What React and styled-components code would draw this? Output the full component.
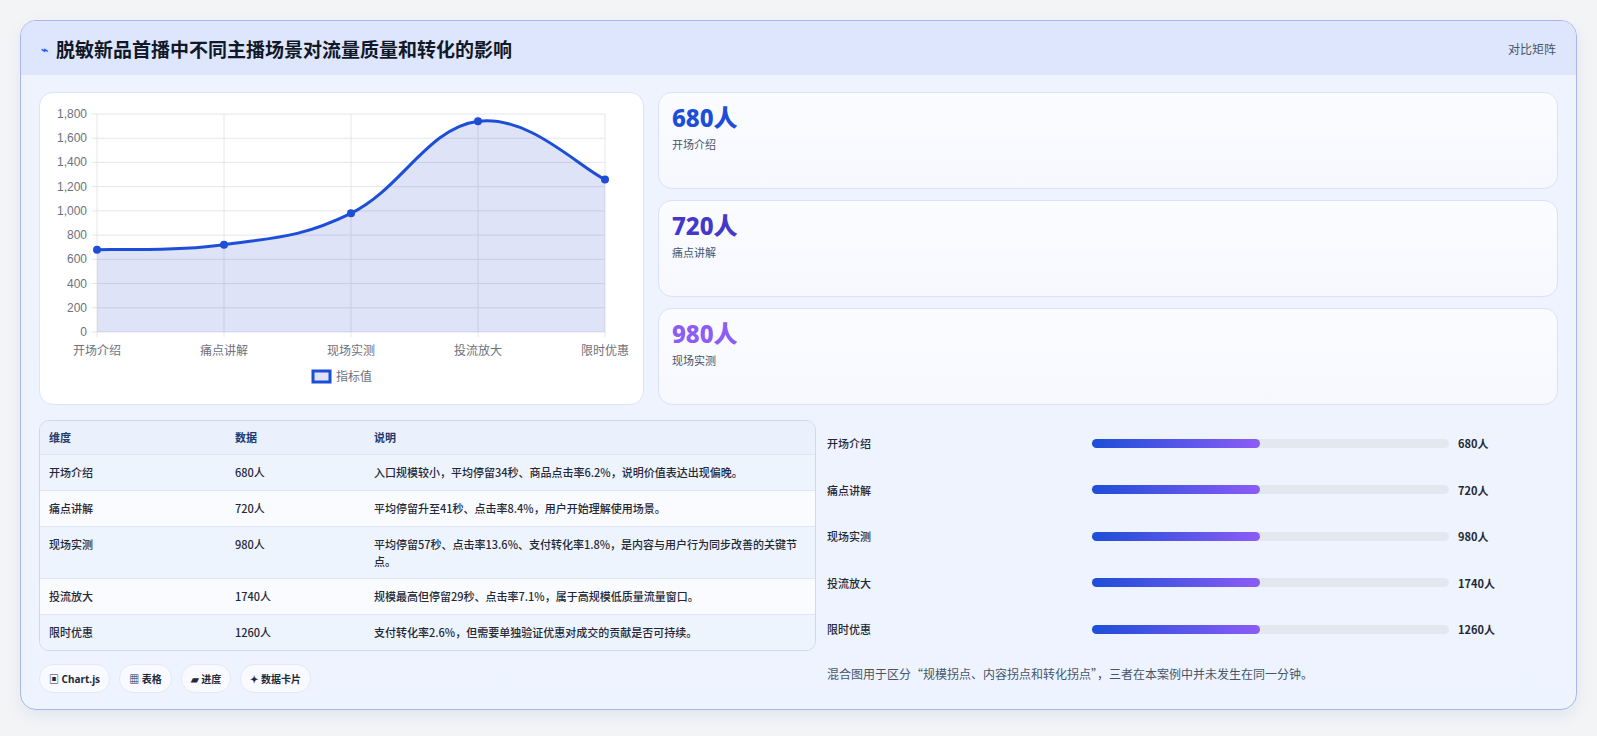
import React from "react";
import styled, { createGlobalStyle } from "styled-components";

const G = createGlobalStyle`
  body{margin:0;background:#f3f4f6;font-family:"Noto Sans","Noto Sans CJK SC",sans-serif;}
`;
const Page = styled.div`padding:20px 20px 35px 20px;`;
const Card = styled.div`border:1px solid #aab6e6;border-radius:16px;background:linear-gradient(180deg,#eef3fe,#eef4ff);overflow:hidden;box-shadow:0 6px 16px rgba(30,60,140,.08);`;
const Header = styled.div`height:54px;background:#dde6fd;display:flex;align-items:center;justify-content:space-between;padding:0 20px;`;
const Title = styled.h1`margin:0;font-size:19px;font-weight:700;color:#111827;font-family:"Noto Sans CJK SC",sans-serif;display:flex;align-items:center;gap:8px;`;
const Bolt = styled.span`color:#2563eb;font-size:12px;`;
const HeadRight = styled.span`font-size:12px;color:#475569;font-family:"Noto Sans CJK SC",sans-serif;`;
const Body = styled.div`padding:17px 18px 16px 18px;display:flex;flex-direction:column;gap:15px;`;
const Top = styled.div`display:grid;grid-template-columns:605px 1fr;gap:14px;height:313px;`;
const Panel = styled.div`background:#fff;border:1px solid #dbe3f5;border-radius:14px;`;
const Stats = styled.div`display:grid;grid-template-rows:repeat(3,1fr);gap:11px;`;
const Stat = styled.div`background:linear-gradient(180deg,#fbfcff,#f6f8fe);border:1px solid #d9e2f6;border-radius:14px;padding:10px 13px;`;
const Val = styled.div`font-size:24px;font-weight:800;color:${p=>p.c};line-height:30px;font-family:"Noto Sans","Noto Sans CJK SC",sans-serif;`;
const Lbl = styled.div`font-size:11px;color:#475569;margin-top:3px;font-family:"Noto Sans CJK SC",sans-serif;`;
const Bottom = styled.div`display:grid;grid-template-columns:777px 1fr;gap:11px;`;
const Table = styled.div`border:1px solid #cfd9ee;border-radius:10px;overflow:hidden;background:#f4f8ff;font-family:"Noto Sans CJK SC",sans-serif;font-size:11px;color:#1f2937;`;
const Row = styled.div`display:grid;grid-template-columns:186px 139px 1fr;padding:${p=>p.h?"8px 9px":"9px 9px 8px"};min-height:${p=>p.h?16:18}px;border-top:${p=>p.first?"none":"1px solid #dfe6f3"};background:${p=>p.h?"#eaf1fd":p.alt?"#f9fbfe":"#eef4fe"};font-weight:${p=>p.h?700:500};color:${p=>p.h?"#1e3a6e":"#1f2937"};line-height:17px;`;
const Right = styled.div`display:flex;flex-direction:column;padding-top:0;`;
const PRow = styled.div`display:grid;grid-template-columns:265px 366px 1fr;align-items:center;height:46.5px;font-size:11px;font-family:"Noto Sans CJK SC",sans-serif;color:#1f2937;font-weight:500;`;
const Track = styled.div`height:9px;border-radius:5px;background:#e2e7f0;margin-right:9px;`;
const Fill = styled.div`height:100%;border-radius:5px;background:linear-gradient(90deg,#1d4ed8,#8b5cf6);`;
const PVal = styled.span`font-weight:700;`;
const Note = styled.div`font-size:12px;color:#475569;margin-top:12px;font-family:"Noto Sans CJK SC",sans-serif;`;
const Chips = styled.div`display:flex;gap:9px;`;
const Chip = styled.span`background:#f8faff;border:1px solid #e3e8f2;border-radius:14px;padding:6px 9px;font-size:10px;font-weight:700;color:#1f2937;font-family:"Noto Sans","Noto Sans CJK SC",sans-serif;`;
const LeftCol = styled.div`display:flex;flex-direction:column;gap:13px;`;

const vals=[680,720,980,1740,1260];
const cats=["开场介绍","痛点讲解","现场实测","投流放大","限时优惠"];
const X=i=>57+i*127;
const Y=v=>239-v/1800*218;

function Chart(){
  const pts=vals.map((v,i)=>[X(i),Y(v)]);
  let d=`M${pts[0][0]},${pts[0][1]}`;
  for(let i=0;i<pts.length-1;i++){
    const p0=pts[i-1]||pts[i],p1=pts[i],p2=pts[i+1],p3=pts[i+2]||p2,t=0.4/2;
    const c1=[p1[0]+(p2[0]-p0[0])*t,p1[1]+(p2[1]-p0[1])*t];
    const c2=[p2[0]-(p3[0]-p1[0])*t,p2[1]-(p3[1]-p1[1])*t];
    d+=` C${c1[0]},${c1[1]} ${c2[0]},${c2[1]} ${p2[0]},${p2[1]}`;
  }
  return(
    <svg width="603" height="311" style={{display:"block"}} fontFamily="'Liberation Sans','Noto Sans CJK SC',sans-serif">
      {Array.from({length:10},(_,k)=>{const y=Y(k*200);return(<g key={k}><line x1="52" x2="565" y1={y} y2={y} stroke="#e3e6ec"/><text x="47" y={y+4} textAnchor="end" fontSize="12" fill="#6b7280">{(k*200).toLocaleString("en-US")}</text></g>)})}
      {cats.map((c,i)=>(<g key={c}><line x1={X(i)} x2={X(i)} y1="21" y2="244" stroke="#e3e6ec"/><text x={X(i)} y="262" textAnchor="middle" fontSize="12" fill="#6b7280">{c}</text></g>))}
      <path d={d+` L565,239 L57,239 Z`} fill="rgba(37,70,210,0.15)"/>
      <path d={d} fill="none" stroke="#1d4ed8" strokeWidth="3"/>
      {pts.map((p,i)=><circle key={i} cx={p[0]} cy={p[1]} r="4" fill="#1d4ed8"/>)}
      <rect x="273" y="278" width="17" height="11" fill="rgba(37,70,210,0.15)" stroke="#1d4ed8" strokeWidth="3"/>
      <text x="296" y="288" fontSize="12" fill="#6b7280">指标值</text>
    </svg>
  );
}

const rows=[["开场介绍","680人","入口规模较小，平均停留34秒、商品点击率6.2%，说明价值表达出现偏晚。"],["痛点讲解","720人","平均停留升至41秒、点击率8.4%，用户开始理解使用场景。"],["现场实测","980人","平均停留57秒、点击率13.6%、支付转化率1.8%，是内容与用户行为同步改善的关键节点。"],["投流放大","1740人","规模最高但停留29秒、点击率7.1%，属于高规模低质量流量窗口。"],["限时优惠","1260人","支付转化率2.6%，但需要单独验证优惠对成交的贡献是否可持续。"]];

export default function App(){
  return(<Page><G/><Card>
    <Header><Title><Bolt>⌁</Bolt>脱敏新品首播中不同主播场景对流量质量和转化的影响</Title><HeadRight>对比矩阵</HeadRight></Header>
    <Body>
      <Top>
        <Panel><Chart/></Panel>
        <Stats>
          <Stat><Val c="#1d4ed8">680人</Val><Lbl>开场介绍</Lbl></Stat>
          <Stat><Val c="#4338ca">720人</Val><Lbl>痛点讲解</Lbl></Stat>
          <Stat><Val c="#8b5cf6">980人</Val><Lbl>现场实测</Lbl></Stat>
        </Stats>
      </Top>
      <Bottom>
        <LeftCol>
          <Table>
            <Row h first><span>维度</span><span>数据</span><span>说明</span></Row>
            {rows.map((r,i)=><Row key={i} alt={i%2===1}><span>{r[0]}</span><span>{r[1]}</span><span>{r[2]}</span></Row>)}
          </Table>
          <Chips><Chip>▣ Chart.js</Chip><Chip>▦ 表格</Chip><Chip>▰ 进度</Chip><Chip>✦ 数据卡片</Chip></Chips>
        </LeftCol>
        <Right>
          {rows.map(r=><PRow key={r[0]}><span>{r[0]}</span><Track><Fill style={{width:"47%"}}/></Track><PVal>{r[1]}</PVal></PRow>)}
          <Note>混合图用于区分“规模拐点、内容拐点和转化拐点”，三者在本案例中并未发生在同一分钟。</Note>
        </Right>
      </Bottom>
    </Body>
  </Card></Page>);
}
